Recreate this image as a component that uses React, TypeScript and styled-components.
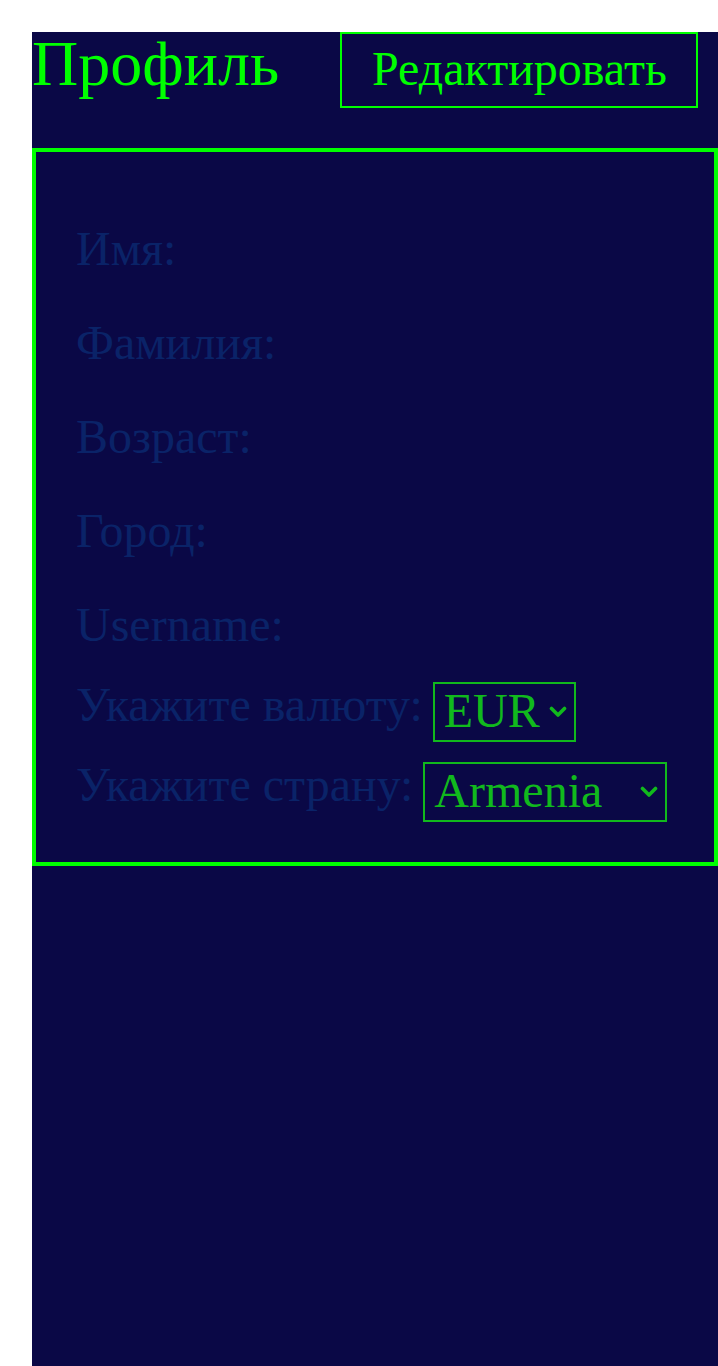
import React from "react";
import styled, { createGlobalStyle } from "styled-components";

const GlobalStyle = createGlobalStyle`
  html, body {
    margin: 0;
    padding: 0;
    background: #ffffff;
    font-family: "Liberation Serif", "Times New Roman", serif;
  }
  #root {
    padding: 32px 0 0 32px;
  }
`;

const Page = styled.div`
  background-color: #0a0846;
  min-height: calc(100vh - 32px);
  display: flex;
  flex-direction: column;
`;

const Header = styled.div`
  display: flex;
  justify-content: space-between;
  align-items: flex-start;
  padding-right: 20px;
  margin-bottom: 40px;
`;

const Title = styled.h1`
  margin: 0;
  font-weight: normal;
  font-size: 64px;
  line-height: 1;
  color: #00ff00;
`;

const EditBtn = styled.button`
  width: 358px;
  height: 76px;
  padding: 0 30px 3px;
  background: transparent;
  border: 2px solid #00ff00;
  color: #00ff00;
  font-family: "Liberation Serif", "Times New Roman", serif;
  font-size: 48px;
  cursor: pointer;
`;

const Card = styled.div`
  border: 4px solid #00ff00;
  padding: 69px 40px 40px 40px;
  display: flex;
  flex-direction: column;
`;

const Fields = styled.div`
  display: flex;
  flex-direction: column;
  gap: 39px;
  margin-bottom: 25px;
`;

const Label = styled.div`
  font-size: 48px;
  line-height: 55px;
  color: #0a2368;
  white-space: nowrap;
`;

const Choices = styled.div`
  display: flex;
  flex-direction: column;
  gap: 15px;
`;

const ChoiceRow = styled.div`
  display: flex;
  align-items: flex-start;
  gap: 10px;
`;

const SelectWrap = styled.div`
  position: relative;
  margin-top: 5px;
`;

const Select = styled.select<{ $w: number }>`
  display: block;
  width: ${(p) => p.$w}px;
  height: 60px;
  padding: 0 0 4px 9px;
  appearance: none;
  -webkit-appearance: none;
  background: transparent;
  border: 2px solid #11b91d;
  border-radius: 0;
  color: #11b91d;
  font-family: "Liberation Serif", "Times New Roman", serif;
  font-size: 48px;
  outline: none;
  cursor: pointer;
`;

const Chevron = styled.svg`
  position: absolute;
  right: 9px;
  top: 24px;
  width: 18px;
  height: 12px;
  pointer-events: none;
`;

const ChevronIcon: React.FC = () => (
  <Chevron viewBox="0 0 18 12">
    <polyline
      points="2.5,2.5 9,9 15.5,2.5"
      fill="none"
      stroke="#11b91d"
      strokeWidth="3.6"
      strokeLinecap="round"
      strokeLinejoin="round"
    />
  </Chevron>
);

const fields = ["Имя:", "Фамилия:", "Возраст:", "Город:", "Username:"];

const App: React.FC = () => {
  return (
    <>
      <GlobalStyle />
      <Page>
        <Header>
          <Title>Профиль</Title>
          <EditBtn>Редактировать</EditBtn>
        </Header>
        <Card>
          <Fields>
            {fields.map((f) => (
              <Label key={f}>{f}</Label>
            ))}
          </Fields>
          <Choices>
            <ChoiceRow>
              <Label>Укажите валюту:</Label>
              <SelectWrap>
                <Select $w={143} defaultValue="EUR">
                  <option value="EUR">EUR</option>
                  <option value="USD">USD</option>
                  <option value="RUB">RUB</option>
                </Select>
                <ChevronIcon />
              </SelectWrap>
            </ChoiceRow>
            <ChoiceRow>
              <Label>Укажите страну:</Label>
              <SelectWrap>
                <Select $w={244} defaultValue="Armenia">
                  <option value="Armenia">Armenia</option>
                  <option value="Russia">Russia</option>
                  <option value="Georgia">Georgia</option>
                </Select>
                <ChevronIcon />
              </SelectWrap>
            </ChoiceRow>
          </Choices>
        </Card>
      </Page>
    </>
  );
};

export default App;
